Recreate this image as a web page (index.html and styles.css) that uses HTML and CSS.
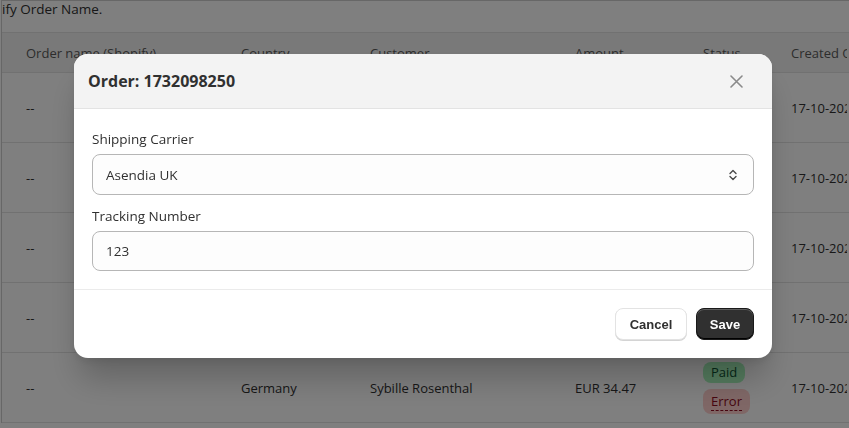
FILE: index.html
```html
<!DOCTYPE html>
<html lang="en">
<head>
<meta charset="utf-8">
<title>Order</title>
<link rel="stylesheet" href="styles.css">
</head>
<body>
<div class="page">
  <div class="card">
    <p class="intro">ify Order Name.</p>
    <div class="table">
      <div class="row head">
        <div>Order name (Shopify)</div><div>Country</div><div>Customer</div><div>Amount</div><div>Status</div><div class="clip">Created On</div>
      </div>
      <div class="row"><div>--</div><div></div><div></div><div></div><div></div><div class="clip">17-10-2024</div></div>
      <div class="row"><div>--</div><div></div><div></div><div></div><div></div><div class="clip">17-10-2024</div></div>
      <div class="row"><div>--</div><div></div><div></div><div></div><div></div><div class="clip">17-10-2024</div></div>
      <div class="row"><div>--</div><div></div><div></div><div></div><div></div><div class="clip">17-10-2024</div></div>
      <div class="row"><div>--</div><div>Germany</div><div>Sybille Rosenthal</div><div>EUR 34.47</div>
        <div class="badges"><span class="badge paid">Paid</span><span class="badge error"><span class="dotted">Error</span></span></div>
        <div class="clip">17-10-2024</div></div>
    </div>
  </div>
</div>

<div class="overlay">
  <div class="modal">
    <div class="modal-head">
      <h2 class="title">Order: 1732098250</h2>
      <button class="close" aria-label="Close">
        <svg width="13" height="13" viewBox="0 0 13 13"><path d="M1 1 L12 12 M12 1 L1 12" stroke="#8a8a8a" stroke-width="1.6" fill="none" stroke-linecap="round"/></svg>
      </button>
    </div>
    <div class="modal-body">
      <label class="label">Shipping Carrier</label>
      <div class="field select">
        <span>Asendia UK</span>
        <svg class="chev" width="12" height="16" viewBox="0 0 12 16"><path d="M3 6.5 L6 3.5 L9 6.5 M3 9.5 L6 12.5 L9 9.5" stroke="#4a4a4a" stroke-width="1.4" fill="none" stroke-linecap="round" stroke-linejoin="round"/></svg>
      </div>
      <label class="label second">Tracking Number</label>
      <div class="field"><span>123</span></div>
    </div>
    <div class="modal-foot">
      <button class="btn cancel">Cancel</button>
      <button class="btn save">Save</button>
    </div>
  </div>
</div>
</body>
</html>
```
FILE: styles.css
```css
* { box-sizing: border-box; }
html, body { margin: 0; padding: 0; }
body {
  width: 849px;
  height: 428px;
  overflow: hidden;
  background: #ffffff;
  font-family: "Open Sans", "Noto Sans", sans-serif;
  font-size: 13px;
  color: #303030;
}
.page { padding: 0 0 0 1px; }
.card {
  border-top: 1px solid #cfcfcf;
  border-left: 1px solid #cfcfcf;
  background: #fff;
}
.intro {
  margin: 0;
  height: 31px;
  line-height: 16px;
  font-size: 13.5px;
  color: #303030;
}
.table { border-top: 1px solid #e3e3e3; }
.row {
  display: grid;
  grid-template-columns: 215px 129px 205px 128px 88px 56px;
  padding-left: 24px;
  height: 70px;
  align-items: center;
  border-bottom: 1px solid #e3e3e3;
  white-space: nowrap;
}
.clip { overflow: hidden; }
.row.head {
  height: 40px;
  background: #f3f3f3;
  color: #5a5a5a;
  border-bottom: 1px solid #e3e3e3;
}
.badges { display: flex; flex-direction: column; align-items: flex-start; gap: 6px; }
.badge {
  display: inline-block;
  padding: 1px 8px;
  border-radius: 8px;
  font-size: 13px;
  line-height: 19px;
}
.badge.paid { background: #a8f5bc; color: #0c5132; }
.badge.error { background: #fecfcd; color: #8e0b21; padding: 3px 8px; }
.dotted { border-bottom: 1px dashed #8e0b21; }

.overlay {
  position: fixed;
  inset: 0;
  background: rgba(0, 0, 0, 0.5);
  display: flex;
  justify-content: flex-start;
  align-items: flex-start;
  padding: 54px 0 0 74px;
}
.modal {
  width: 698px;
  background: #fff;
  border-radius: 14px;
  overflow: hidden;
  box-shadow: 0 26px 32px -6px rgba(0, 0, 0, 0.22), 0 4px 8px rgba(0, 0, 0, 0.08);
}
.modal-head {
  height: 55px;
  background: #f3f3f3;
  border-bottom: 1px solid #e3e3e3;
  display: flex;
  align-items: center;
  justify-content: space-between;
  padding: 0 22px 0 14px;
}
.title {
  margin: 0;
  font-size: 16px;
  font-weight: 700;
  color: #303030;
}
.close {
  width: 28px; height: 28px;
  border: 0; background: transparent; padding: 0;
  display: flex; align-items: center; justify-content: center;
}
.modal-body {
  padding: 20px 18px 18px 18px;
  border-bottom: 1px solid #ebebeb;
}
.label {
  display: block;
  line-height: 20px;
  margin-bottom: 5px;
  font-size: 13.5px;
  color: #303030;
}
.label.second { margin-top: 11px; }
.field {
  height: 40px;
  border: 1px solid #b6b6b6;
  border-radius: 8px;
  background: #fdfdfd;
  display: flex;
  align-items: center;
  padding: 0 13px;
  font-size: 13.5px;
  color: #303030;
}
.field.select { height: 41px; justify-content: space-between; padding-right: 14px; }
.modal-foot {
  display: flex;
  justify-content: flex-end;
  gap: 9px;
  padding: 18px;
}
.btn {
  height: 32px;
  border-radius: 8px;
  font-family: "Liberation Sans", Arial, sans-serif;
  font-weight: 700;
  font-size: 13px;
  padding: 0 12px;
}
.cancel {
  width: 72px;
  background: #fff;
  color: #303030;
  border: 1px solid #e3e3e3;
  box-shadow: 0 1px 0 #d4d4d4;
}
.save {
  width: 58px;
  background: #303030;
  color: #fff;
  border: 1px solid #1a1a1a;
  box-shadow: inset 0 1px 0 rgba(255,255,255,0.22), inset 0 -1px 0 #000;
}
```
